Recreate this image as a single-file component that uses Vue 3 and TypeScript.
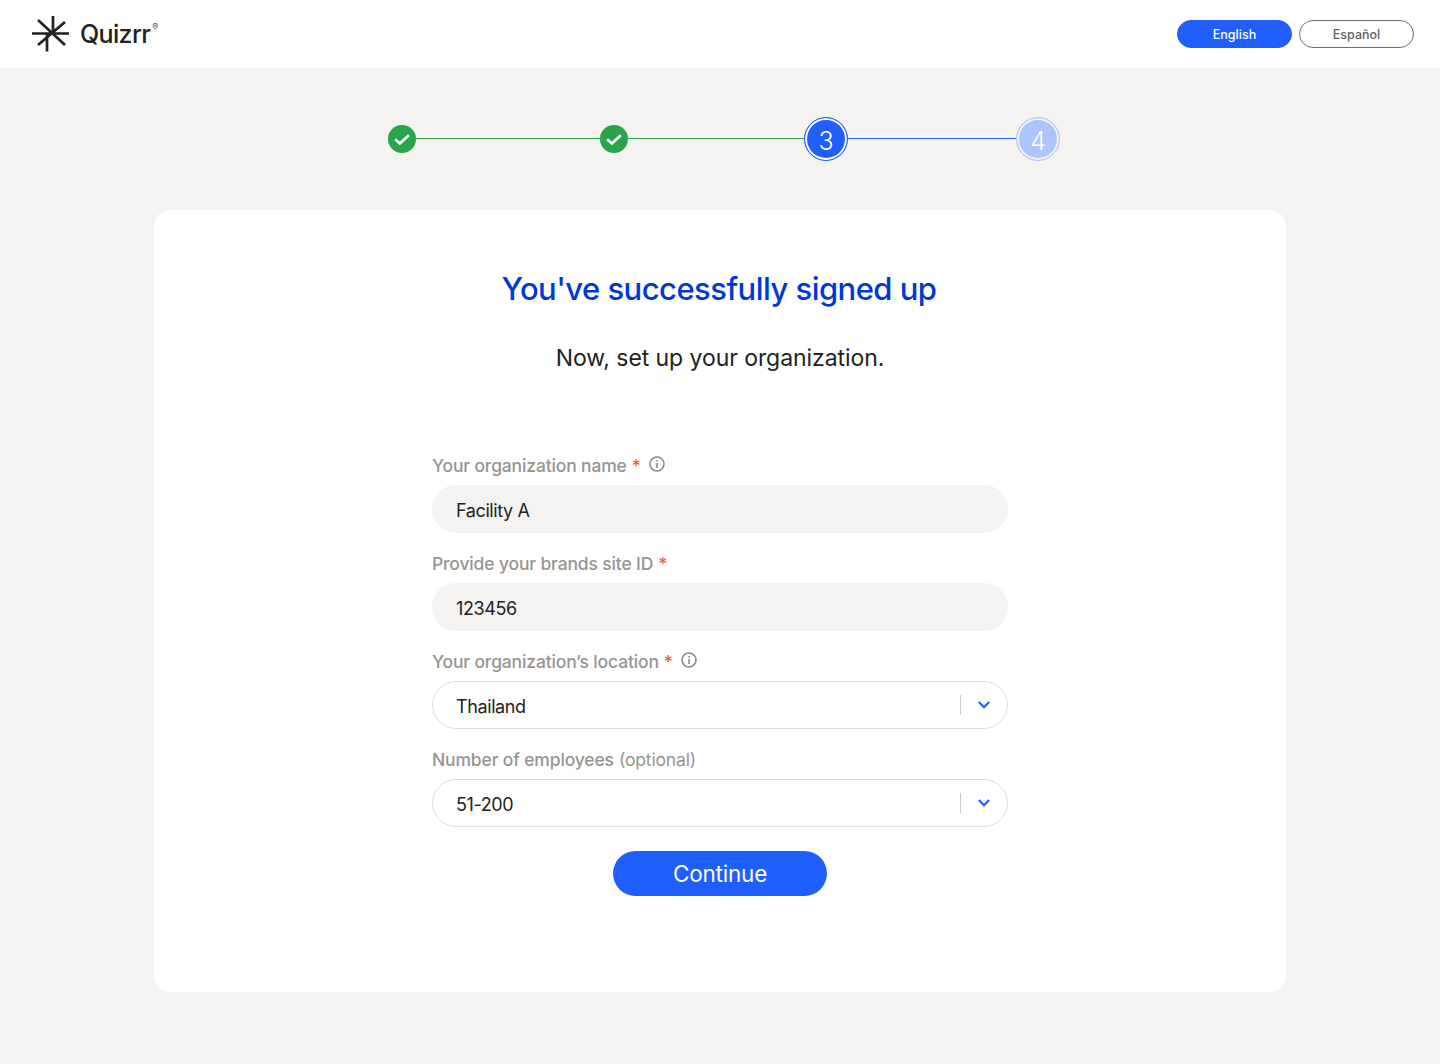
<script setup lang="ts">
interface Field {
  label: string;
  value: string;
  required: boolean;
  info: boolean;
  optional: boolean;
  select: boolean;
}
const fields: Field[] = [
  { label: "Your organization name", value: "Facility A", required: true, info: true, optional: false, select: false },
  { label: "Provide your brands site ID", value: "123456", required: true, info: false, optional: false, select: false },
  { label: "Your organization’s location", value: "Thailand", required: true, info: true, optional: false, select: true },
  { label: "Number of employees", value: "51-200", required: false, info: false, optional: true, select: true },
];
</script>

<template>
  <div class="page">
    <header class="topbar">
      <div class="logo">
        <svg class="mark" width="38" height="38" viewBox="0 0 38 38" fill="none" stroke="#222" stroke-width="2.7">
          <path d="M0 18.5H37M21 1V18.5M15 18.5V36.5M6 5L33 30M33 7L6 30" />
        </svg>
        <span class="brand">Quizrr</span><span class="reg">®</span>
      </div>
      <div class="langs">
        <button class="lang active">English</button>
        <button class="lang">Español</button>
      </div>
    </header>

    <div class="stepper">
      <span class="check">
        <svg width="20" height="20" viewBox="0 0 16 16" fill="none" stroke="#fff" stroke-width="2.2"><path d="M2.5 8.2L6.3 11.6L13.5 5" /></svg>
      </span>
      <span class="line green"></span>
      <span class="check">
        <svg width="20" height="20" viewBox="0 0 16 16" fill="none" stroke="#fff" stroke-width="2.2"><path d="M2.5 8.2L6.3 11.6L13.5 5" /></svg>
      </span>
      <span class="line green short"></span>
      <span class="num current">3</span>
      <span class="line blue"></span>
      <span class="num upcoming">4</span>
    </div>

    <main class="card">
      <h1>You've successfully signed up</h1>
      <p class="sub">Now, set up your organization.</p>
      <form class="form" @submit.prevent>
        <div v-for="f in fields" :key="f.label" class="field">
          <div class="label">
            <span>{{ f.label }}</span>
            <span v-if="f.required" class="star">*</span>
            <span v-if="f.optional" class="opt">(optional)</span>
            <svg v-if="f.info" class="info" width="16" height="16" viewBox="0 0 16 16" fill="none" stroke="#8c8a87" stroke-width="1.6">
              <circle cx="8" cy="8" r="7" />
              <path d="M8 7V12" />
              <path d="M8 4V5.6" />
            </svg>
          </div>
          <div class="control" :class="{ select: f.select }">
            <span class="value">{{ f.value }}</span>
            <template v-if="f.select">
              <span class="divider"></span>
              <svg class="chev" width="12" height="8" viewBox="0 0 12 8" fill="none" stroke="#1f5eff" stroke-width="2.2"><path d="M0.8 1L6 6.2L11.2 1" /></svg>
            </template>
          </div>
        </div>
        <button class="continue" type="submit">Continue</button>
      </form>
    </main>
  </div>
</template>

<style>
html, body { margin: 0; background: #f4f3f1; }
</style>

<style scoped>
.page {
  min-height: 1064px;
  background: #f4f3f1;
  font-family: Inter, "Noto Sans", sans-serif;
  color: #222;
  display: flex;
  flex-direction: column;
  align-items: center;
}
.topbar {
  align-self: stretch;
  height: 68px;
  background: #fff;
  display: flex;
  align-items: center;
  justify-content: space-between;
  padding: 0 26px 0 32px;
}
.logo { display: flex; align-items: center; }
.mark { margin-right: 10px; }
.brand { font-size: 25px; font-weight: 500; letter-spacing: -0.65px; line-height: 34px; }
.reg { font-size: 9px; line-height: 12px; align-self: flex-start; margin: 6px 0 0 2px; color: #555; }
.langs { display: flex; gap: 7px; }
.lang {
  width: 115px;
  height: 28px;
  border-radius: 14px;
  border: 1px solid #6f6f6f;
  background: #fff;
  color: #5f5f5f;
  font: 500 12.5px Inter, sans-serif;
  padding: 0;
}
.lang.active { background: #1f5eff; border-color: #1f5eff; color: #fff; }
.stepper {
  margin: 49px 0 0 8px;
  height: 44px;
  display: flex;
  align-items: center;
}
.check {
  width: 28px;
  height: 28px;
  border-radius: 50%;
  background: #2aa44a;
  display: flex;
  align-items: center;
  justify-content: center;
}
.line { height: 1px; width: 184px; margin-top: -1px; }
.line.short { width: 176px; }
.line.green { background: #2aa44a; }
.line.blue { background: #1f5eff; width: 168px; }
.num {
  width: 44px;
  height: 44px;
  box-sizing: border-box;
  padding-top: 3px;
  border-radius: 50%;
  color: #fff;
  font-size: 25px;
  font-weight: 300;
  display: flex;
  align-items: center;
  justify-content: center;
  background-clip: padding-box;
}
.num.current { background: #1f5eff; box-shadow: inset 0 0 0 2px #fff; border: 1px solid #1f5eff; }
.num.upcoming { background: #adc5ff; box-shadow: inset 0 0 0 2px #f4f3f1; border: 1px solid #adc5ff; }
.card {
  margin-top: 49px;
  width: 1132px;
  height: 782px;
  box-sizing: border-box;
  background: #fff;
  border-radius: 16px;
  padding-top: 59px;
  display: flex;
  flex-direction: column;
  align-items: center;
}
h1 {
  margin: 0 2px 0 0;
  font-size: 31px;
  line-height: 40px;
  font-weight: 500;
  color: #0038d8;
  letter-spacing: -0.54px;
}
.sub {
  margin: 34px 0 0;
  font-size: 23px;
  line-height: 30px;
  color: #222;
  letter-spacing: -0.07px;
}
.form {
  margin-top: 81px;
  width: 576px;
  display: flex;
  flex-direction: column;
}
.field { display: flex; flex-direction: column; }
.field + .field { margin-top: 19px; }
.label {
  height: 31px;
  display: flex;
  align-items: flex-start;
  font-size: 17.5px;
  line-height: 24px;
  color: #97948f;
  font-weight: 500;
  letter-spacing: -0.15px;
}
.star { color: #f0622a; margin-left: 5px; }
.opt { margin-left: 5px; font-weight: 400; }
.info { margin: 2px 0 0 8px; }
.control {
  height: 48px;
  box-sizing: border-box;
  border-radius: 24px;
  background: #f4f3f1;
  display: flex;
  align-items: center;
  padding: 0 17px 0 24px;
  font-size: 18px;
  letter-spacing: -0.4px;
}
.control.select { background: #fff; border: 1px solid #e0ded9; padding-left: 23px; }
.value { flex: 1; padding-top: 3px; }
.divider { width: 1px; height: 20px; background: #cfcdc8; margin-right: 17px; margin-left: -1px; }
.continue {
  align-self: center;
  margin-top: 24px;
  width: 214px;
  height: 45px;
  border: 0;
  border-radius: 23px;
  background: #1f5eff;
  color: #fff;
  font: 400 22.5px Inter, sans-serif;
  letter-spacing: -0.2px;
}
</style>
